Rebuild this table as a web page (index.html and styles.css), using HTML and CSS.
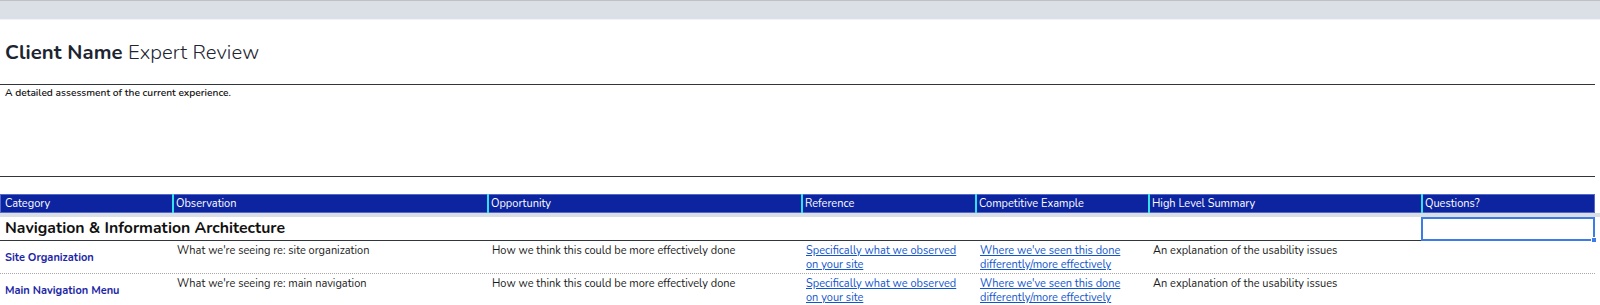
FILE: index.html
```html
<!DOCTYPE html>
<html>
<head>
<meta charset="utf-8">
<link rel="stylesheet" href="styles.css">
</head>
<body>
<div class="topbar"></div>
<div class="sheet">
  <div class="title-row">
    <h1 class="title"><b>Client Name</b> Expert Review</h1>
  </div>
  <div class="subtitle-row">
    <p class="subtitle">A detailed assessment of the current experience.</p>
  </div>
  <div class="spacer"></div>
  <div class="grid header">
    <div class="hcell first">Category</div>
    <div class="hcell">Observation</div>
    <div class="hcell">Opportunity</div>
    <div class="hcell">Reference</div>
    <div class="hcell">Competitive Example</div>
    <div class="hcell">High Level Summary</div>
    <div class="hcell">Questions?</div>
  </div>
  <div class="freeze"></div>
  <div class="grid section">
    <div class="section-title">Navigation &amp; Information Architecture</div>
    <div class="selected"><span class="handle"></span></div>
  </div>
  <div class="grid row">
    <div class="cell cat">Site Organization</div>
    <div class="cell">What we're seeing re: site organization</div>
    <div class="cell">How we think this could be more effectively done</div>
    <div class="cell"><a href="#">Specifically what we observed<br>on your site</a></div>
    <div class="cell"><a href="#">Where we've seen this done<br>differently/more effectively</a></div>
    <div class="cell">An explanation of the usability issues</div>
    <div class="cell"></div>
  </div>
  <div class="grid row">
    <div class="cell cat">Main Navigation Menu</div>
    <div class="cell">What we're seeing re: main navigation</div>
    <div class="cell">How we think this could be more effectively done</div>
    <div class="cell"><a href="#">Specifically what we observed<br>on your site</a></div>
    <div class="cell"><a href="#">Where we've seen this done<br>differently/more effectively</a></div>
    <div class="cell">An explanation of the usability issues</div>
    <div class="cell"></div>
  </div>
</div>
</body>
</html>
```

FILE: styles.css
```css
* { box-sizing: border-box; }
html, body { margin: 0; padding: 0; background: #fff; }
body {
  font-family: "Nunito", Lato, "Noto Sans", sans-serif;
  color: #1b1b1b;
  overflow: hidden;
}
.topbar {
  height: 20px;
  background: #dbe0e7;
  border-top: 1px solid #bfc1c4;
  border-bottom: 1px solid #eef2fa;
}
.sheet { width: 1595px; }
.title-row {
  height: 65px;
  display: flex;
  align-items: center;
  padding: 0 5px;
  border-bottom: 1px solid #30363c;
}
.title {
  margin: 0;
  font-size: 20.3px;
  font-weight: 300;
  color: #1c2530;
  letter-spacing: 0.1px;
}
.title b { font-weight: 700; }
.subtitle-row {
  height: 92px;
  padding: 1px 5px 0;
  border-bottom: 1px solid #30363c;
}
.subtitle {
  margin: 0;
  font-size: 10.2px;
  font-weight: 600;
  color: #111;
}
.spacer { height: 17px; }
.grid {
  display: grid;
  grid-template-columns: 172px 315px 314px 174px 173px 273px 174px;
}
.header {
  height: 19px;
  background: #0c24a0;
  box-shadow: inset 0 0 0 1px #5468cc;
}
.hcell {
  color: #fff;
  font-size: 11px;
  line-height: 19px;
  padding: 0 2px;
  border-left: 2px solid #34e1ea;
  white-space: nowrap;
}
.hcell.first { border-left: none; padding-left: 5px; }
.freeze {
  height: 4px;
  width: 1600px;
  background: #dadfe6;
}
.section {
  height: 24px;
  border-bottom: 1px solid #30363c;
}
.section-title {
  grid-column: 1 / 7;
  font-size: 15.8px;
  font-weight: 700;
  color: #111;
  padding: 0 5px;
  line-height: 23px;
}
.selected {
  position: relative;
  border: 2px solid #3d7be6;
  margin-bottom: -1px;
}
.handle {
  position: absolute;
  right: -4px;
  bottom: -4px;
  width: 6px;
  height: 6px;
  background: #3d7be6;
  border: 1px solid #fff;
}
.row {
  height: 33px;
  border-bottom: 1px dotted #a9a9a9;
}
.cell {
  font-size: 11px;
  line-height: 14px;
  padding: 3px 5px 0;
  color: #1a1a1a;
}
.cell.cat {
  display: flex;
  align-items: center;
  padding-top: 2px;
  font-size: 11px;
  font-weight: 700;
  color: #1c26a6;
}
.cell a { color: #1155cc; text-decoration: underline; }
```
